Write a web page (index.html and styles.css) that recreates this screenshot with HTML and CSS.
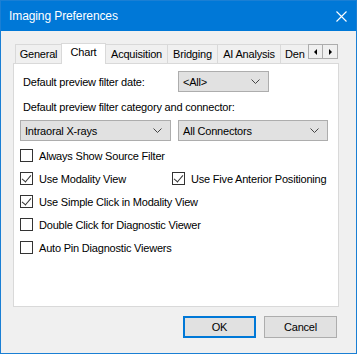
FILE: index.html
```html
<!DOCTYPE html>
<html lang="en">

<head>
    <meta charset="UTF-8">
    <title>Imaging Preferences</title>
    <link rel="stylesheet" href="styles.css">
</head>

<body>
    <div class="window">
        <!-- 标题栏 -->
        <header class="titlebar">
            <span class="title">Imaging Preferences</span>
            <svg class="close" width="11" height="11" viewBox="0 0 11 11">
                <path d="M0.5 0.5 L10.5 10.5 M10.5 0.5 L0.5 10.5" stroke="#fff" stroke-width="1.1" fill="none" />
            </svg>
        </header>

        <div class="body">
            <!-- 选项卡 -->
            <ul class="tabs">
                <li class="tab tab_general">General</li>
                <li class="tab tab_chart active">Chart</li>
                <li class="tab tab_acq">Acquisition</li>
                <li class="tab tab_bridge">Bridging</li>
                <li class="tab tab_ai">AI Analysis</li>
                <li class="tab tab_cut">Den</li>
                <li class="scroll_btns">
                    <span class="scroll_btn"><i class="arrow_left"></i></span>
                    <span class="scroll_btn"><i class="arrow_right"></i></span>
                </li>
            </ul>

            <section class="panel">
                <div class="grid">
                    <label class="text">Default preview filter date:</label>
                    <div class="select select_short">
                        <span>&lt;All&gt;</span>
                        <svg width="9" height="5" viewBox="0 0 9 5">
                            <polyline points="0.5,0.5 4.5,4.5 8.5,0.5" stroke="#444" fill="none" />
                        </svg>
                    </div>
                </div>
                <p class="text text_line">Default preview filter category and connector:</p>
                <div class="grid">
                    <div class="select">
                        <span>Intraoral X-rays</span>
                        <svg width="9" height="5" viewBox="0 0 9 5">
                            <polyline points="0.5,0.5 4.5,4.5 8.5,0.5" stroke="#444" fill="none" />
                        </svg>
                    </div>
                    <div class="select">
                        <span>All Connectors</span>
                        <svg width="9" height="5" viewBox="0 0 9 5">
                            <polyline points="0.5,0.5 4.5,4.5 8.5,0.5" stroke="#444" fill="none" />
                        </svg>
                    </div>
                </div>

                <div class="checks">
                    <div class="check_row">
                        <span class="check"><span class="box"></span>Always Show Source Filter</span>
                    </div>
                    <div class="check_row">
                        <span class="check check_col"><span class="box checked"></span>Use Modality View</span>
                        <span class="check"><span class="box checked"></span>Use Five Anterior Positioning</span>
                    </div>
                    <div class="check_row">
                        <span class="check"><span class="box checked"></span>Use Simple Click in Modality View</span>
                    </div>
                    <div class="check_row">
                        <span class="check"><span class="box"></span>Double Click for Diagnostic Viewer</span>
                    </div>
                    <div class="check_row">
                        <span class="check"><span class="box"></span>Auto Pin Diagnostic Viewers</span>
                    </div>
                </div>
            </section>

            <!-- 底部按钮 -->
            <footer class="buttons">
                <button class="btn btn_default">OK</button>
                <button class="btn">Cancel</button>
            </footer>
        </div>
    </div>
</body>

</html>
```

FILE: styles.css
```css
* {
    padding: 0;
    margin: 0;
    box-sizing: border-box;
}

body {
    font-family: "Liberation Sans", Arial, sans-serif;
    font-size: 11px;
    letter-spacing: -0.2px;
    color: #000;
    background: #fff;
}

.window {
    width: 357px;
    height: 354px;
    border: 1px solid #1a7fd4;
    background-color: #f0f0f0;
    display: flex;
    flex-direction: column;
}

.titlebar {
    height: 30px;
    background-color: #0078d7;
    color: #ffffff;
    display: flex;
    align-items: center;
    justify-content: space-between;
    padding: 0 9px 0 8px;
}

.title {
    font-size: 12px;
    letter-spacing: -0.1px;
}

.close {
    display: block;
}

.body {
    flex: 1;
    padding: 12px 16px 0 12px;
    display: flex;
    flex-direction: column;
}

.tabs {
    list-style: none;
    display: flex;
    align-items: flex-end;
    height: 20px;
    padding-left: 2px;
    position: relative;
    z-index: 1;
}

.tab {
    height: 19px;
    border: 1px solid #d9d9d9;
    border-bottom: none;
    border-left: none;
    background-color: #f0f0f0;
    line-height: 19px;
    text-align: center;
    white-space: nowrap;
    overflow: hidden;
}

.tab_general {
    width: 47px;
    border-left: 1px solid #d9d9d9;
}

.tab_chart {
    width: 45px;
}

.tab_acq {
    width: 62px;
}

.tab_bridge {
    width: 50px;
}

.tab_ai {
    width: 63px;
}

.tab.active {
    height: 21px;
    margin-bottom: -1px;
    margin-left: -1px;
    background-color: #ffffff;
    border-left: 1px solid #d9d9d9;
    line-height: 17px;
}

.tab_cut {
    width: 27px;
    text-align: left;
    padding-left: 4px;
    border-right: none;
}

.scroll_btns {
    display: flex;
    align-self: flex-start;
    margin-top: 1px;
}

.scroll_btn {
    width: 15px;
    height: 15px;
    border: 1px solid #adadad;
    background-color: #f0f0f0;
    display: flex;
    align-items: center;
    justify-content: center;
}

.scroll_btn + .scroll_btn {
    border-left: none;
}

.arrow_left {
    width: 0;
    height: 0;
    border-top: 3px solid transparent;
    border-bottom: 3px solid transparent;
    border-right: 3px solid #000;
}

.arrow_right {
    width: 0;
    height: 0;
    border-top: 3px solid transparent;
    border-bottom: 3px solid transparent;
    border-left: 3px solid #000;
}

.panel {
    height: 244px;
    width: 326px;
    border: 1px solid #d9d9d9;
    background-color: #ffffff;
    padding: 7px 6px 0 6px;
}

.grid {
    display: grid;
    grid-template-columns: 151px 150px;
    column-gap: 7px;
    align-items: center;
}

.text {
    padding-left: 3px;
    white-space: nowrap;
}

.text_line {
    margin: 8px 0 6px;
    line-height: 14px;
}

.select {
    height: 21px;
    border: 1px solid #adadad;
    background-color: #e1e1e1;
    display: flex;
    align-items: center;
    justify-content: space-between;
    padding: 0 8px 0 4px;
}

.select_short {
    width: 91px;
}

.checks {
    margin-top: 3px;
}

.check_row {
    height: 23px;
    display: flex;
    align-items: center;
}

.check {
    display: flex;
    align-items: center;
    white-space: nowrap;
}

.check_col {
    width: 152px;
}

.box {
    width: 13px;
    height: 13px;
    border: 1px solid #333333;
    background-color: #ffffff;
    margin-right: 6px;
    position: relative;
}

.box.checked::after {
    content: "";
    position: absolute;
    left: 3px;
    top: 0px;
    width: 4px;
    height: 8px;
    border-right: 1px solid #333;
    border-bottom: 1px solid #333;
    transform: rotate(40deg);
}

.buttons {
    display: flex;
    justify-content: flex-end;
    gap: 8px;
    margin-top: 9px;
    padding-right: 3px;
}

.btn {
    width: 73px;
    height: 22px;
    border: 1px solid #adadad;
    background-color: #e1e1e1;
    font-family: inherit;
    font-size: 11px;
    letter-spacing: inherit;
    color: #000;
}

.btn_default {
    border: 2px solid #0078d7;
}
```
